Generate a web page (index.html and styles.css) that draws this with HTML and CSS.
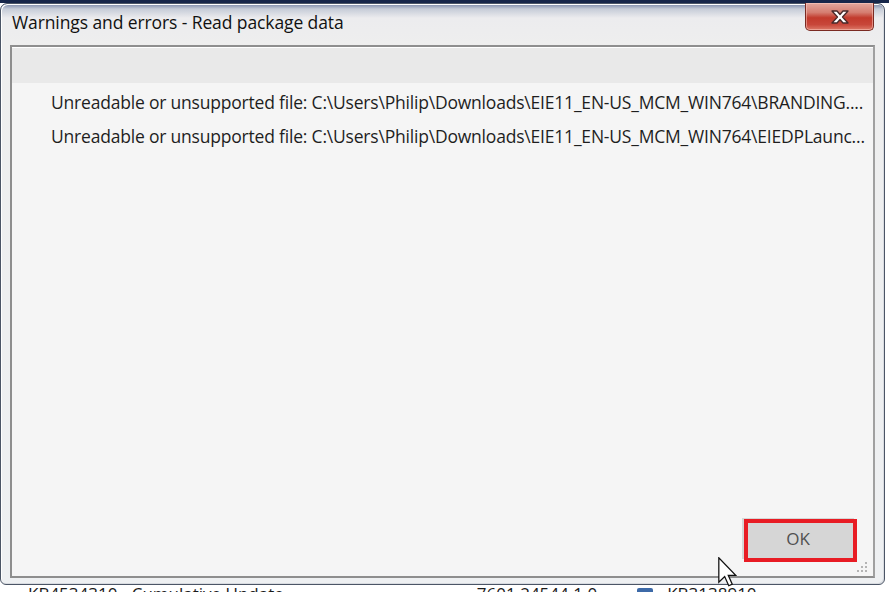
FILE: index.html
```html
<!DOCTYPE html>
<html>
<head>
<meta charset="utf-8">
<title>Warnings and errors - Read package data</title>
<link rel="stylesheet" href="styles.css">
</head>
<body>
<div class="desktop">
  <div class="app-topbar"></div>
  <div class="app-fill"></div>
  <div class="app-row">
    <span class="app-kb">KB4534310 - Cumulative Update</span>
    <span class="app-ver">7601.24544.1.0</span>
    <span class="app-icon"></span>
    <span class="app-kb2">KB3138910</span>
  </div>

  <div class="window">
    <div class="titlebar">
      <span class="title">Warnings and errors - Read package data</span>
      <div class="close-btn">
        <svg width="22" height="16" viewBox="0 0 22 16">
          <path d="M3 2 L8 2 L11 5.5 L14 2 L19 2 L13.5 8 L19 14 L14 14 L11 10.5 L8 14 L3 14 L8.5 8 Z" fill="#ffffff" stroke="#4a2a2a" stroke-width="1.3" stroke-linejoin="round"/>
        </svg>
      </div>
    </div>
    <div class="panel">
      <div class="panel-head"></div>
      <div class="panel-body">
        <div class="messages">
          <div class="msg">Unreadable or unsupported file: C:\Users\Philip\Downloads\EIE11_EN-US_MCM_WIN764\BRANDING....</div>
          <div class="msg">Unreadable or unsupported file: C:\Users\Philip\Downloads\EIE11_EN-US_MCM_WIN764\EIEDPLaunc...</div>
        </div>
        <div class="footer">
          <div class="ok-btn">OK<span class="highlight"></span></div>
        </div>
        <svg class="grip" width="12" height="12" viewBox="0 0 12 12">
          <g fill="#b4b4b4">
            <rect x="9" y="1" width="2" height="2"/>
            <rect x="5" y="5" width="2" height="2"/><rect x="9" y="5" width="2" height="2"/>
            <rect x="1" y="9" width="2" height="2"/><rect x="5" y="9" width="2" height="2"/><rect x="9" y="9" width="2" height="2"/>
          </g>
        </svg>
      </div>
    </div>
  </div>

  <svg class="cursor" width="19" height="30" viewBox="0 0 12 19">
    <path d="M0.5 0.5 L0.5 16 L4.2 12.4 L6.8 18.2 L9 17.2 L6.5 11.6 L11.2 11.6 Z" fill="#ffffff" stroke="#111" stroke-width="0.8" stroke-linejoin="miter"/>
  </svg>
</div>
</body>
</html>
```
FILE: styles.css
```css
html, body {
  margin: 0;
  padding: 0;
}
body {
  width: 889px;
  height: 592px;
  overflow: hidden;
  font-family: "Open Sans", "Noto Sans", sans-serif;
}
.desktop {
  position: relative;
  width: 889px;
  height: 592px;
  overflow: hidden;
  background: #ffffff;
  display: flex;
  flex-direction: column;
}
.app-topbar {
  height: 3px;
  background: #16264a;
  flex: none;
}
.app-fill {
  flex: 1;
  background: #ffffff;
}
.app-row {
  flex: none;
  height: 12px;
  display: flex;
  align-items: flex-start;
  font-size: 17px;
  line-height: 23px;
  color: #1a1a1a;
  white-space: nowrap;
}
.app-kb {
  margin-left: 28px;
  margin-top: 2px;
}
.app-ver {
  margin-left: 193px;
  margin-top: 2px;
}
.app-icon {
  width: 16px;
  height: 16px;
  margin-left: 40px;
  margin-top: 8px;
  background: #3d6aa8;
  border-radius: 2px;
}
.app-kb2 {
  margin-left: 14px;
  margin-top: 2px;
}

/* Dialog window */
.window {
  position: absolute;
  left: 0;
  top: 3px;
  width: 885px;
  height: 582px;
  box-sizing: border-box;
  border: 1px solid #4b5566;
  border-radius: 7px 7px 6px 6px;
  background: linear-gradient(180deg, #7a88a8 0px, #c6ccd8 5px, #ececee 14px, #eeeeee 40px, #eef0f2 100%);
  display: flex;
  flex-direction: column;
  box-shadow: inset 1px 1px 0 #ffffff, inset -1px -1px 0 #d8dbe0;
}
.titlebar {
  position: relative;
  height: 41px;
  flex: none;
}
.title {
  position: absolute;
  left: 11px;
  top: 6px;
  font-size: 17.5px;
  color: #111111;
  letter-spacing: -0.1px;
  white-space: nowrap;
}
.close-btn {
  position: absolute;
  right: 10px;
  top: -1px;
  width: 69px;
  height: 28px;
  box-sizing: border-box;
  border: 1px solid #7a2a22;
  border-top: none;
  border-radius: 0 0 5px 5px;
  background: linear-gradient(180deg, #e3a89e 0%, #d57d70 35%, #c23a2c 55%, #c8473a 80%, #dc7a68 100%);
  display: flex;
  align-items: center;
  justify-content: center;
  box-shadow: inset 0 0 0 1px rgba(255, 210, 200, 0.5);
}

.panel {
  flex: 1;
  margin: 0 9px 6px 9px;
  border: 2px solid #8e8e8e;
  border-right-color: #a0a0a0;
  display: flex;
  flex-direction: column;
  background: #f4f4f4;
  box-shadow: inset 1px 1px 0 #ffffff;
}
.panel-head {
  height: 36px;
  flex: none;
  background: #e9e9e9;
  border-top: 1px solid #ffffff;
  box-sizing: border-box;
}
.panel-body {
  flex: 1;
  position: relative;
  display: flex;
  flex-direction: column;
  background: #f5f5f5;
}
.messages {
  flex: 1;
  padding: 2px 0 0 39px;
}
.msg {
  font-size: 17.5px;
  line-height: 34px;
  color: #1e1e1e;
  white-space: nowrap;
  letter-spacing: -0.2px;
}
.footer {
  display: flex;
  justify-content: flex-end;
  padding: 0 19px 17px 0;
}
.ok-btn {
  position: relative;
  width: 112px;
  height: 41px;
  background: #d6d6d6;
  display: flex;
  align-items: center;
  justify-content: center;
  font-size: 17px;
  color: #505050;
}
.highlight {
  position: absolute;
  left: 2px;
  top: 1px;
  width: 113px;
  height: 43px;
  box-sizing: border-box;
  border: 4px solid #e81c24;
}
.grip {
  position: absolute;
  right: 5px;
  bottom: 3px;
}
.cursor {
  position: absolute;
  left: 718px;
  top: 557px;
}
```
